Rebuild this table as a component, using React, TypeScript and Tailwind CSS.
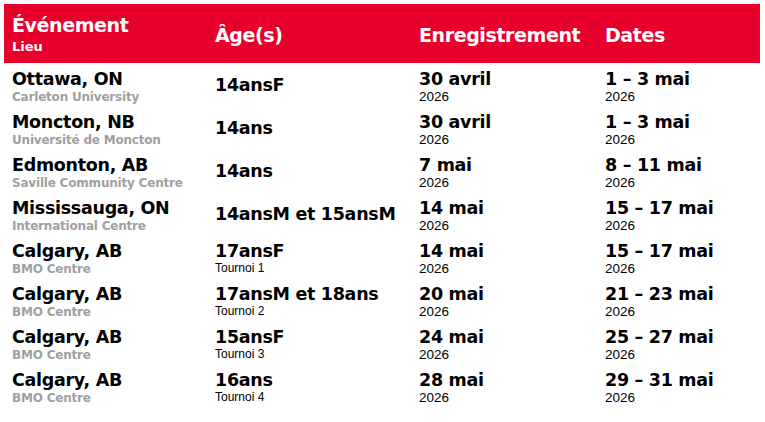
import React from 'react';

interface Row {
  city: string;
  venue: string;
  age: string;
  tournoi?: string;
  reg: string;
  dates: string;
}

const rows: Row[] = [
  { city: 'Ottawa, ON', venue: 'Carleton University', age: '14ansF', reg: '30 avril', dates: '1 – 3 mai' },
  { city: 'Moncton, NB', venue: 'Université de Moncton', age: '14ans', reg: '30 avril', dates: '1 – 3 mai' },
  { city: 'Edmonton, AB', venue: 'Saville Community Centre', age: '14ans', reg: '7 mai', dates: '8 – 11 mai' },
  { city: 'Mississauga, ON', venue: 'International Centre', age: '14ansM et 15ansM', reg: '14 mai', dates: '15 – 17 mai' },
  { city: 'Calgary, AB', venue: 'BMO Centre', age: '17ansF', tournoi: 'Tournoi 1', reg: '14 mai', dates: '15 – 17 mai' },
  { city: 'Calgary, AB', venue: 'BMO Centre', age: '17ansM et 18ans', tournoi: 'Tournoi 2', reg: '20 mai', dates: '21 – 23 mai' },
  { city: 'Calgary, AB', venue: 'BMO Centre', age: '15ansF', tournoi: 'Tournoi 3', reg: '24 mai', dates: '25 – 27 mai' },
  { city: 'Calgary, AB', venue: 'BMO Centre', age: '16ans', tournoi: 'Tournoi 4', reg: '28 mai', dates: '29 – 31 mai' },
];

const bold = "font-['DejaVu_Sans',sans-serif] font-bold";
const main = `${bold} text-[17.5px] leading-[22px] tracking-[-0.3px] text-black whitespace-nowrap`;
const small = "font-['Liberation_Sans',Arial,sans-serif] text-black whitespace-nowrap";

const App = () => {
  return (
    <div className="w-[765px] h-[422px] bg-white pt-[4px] pl-[4px]">
      <div className="w-[756px]">

        {/* header */}
        <div className="flex h-[59px] bg-[#e8002c] text-white">
          <div className="w-[211px] pl-[8px] pt-[10px]">
            <div className={`${bold} text-[19px] leading-[22px] tracking-[-0.4px]`}>Événement</div>
            <div className={`${bold} text-[13px] leading-[16px] mt-[3px]`}>Lieu</div>
          </div>
          <div className={`w-[204px] pt-[20px] ${bold} text-[19px] leading-[22px] tracking-[-0.4px]`}>Âge(s)</div>
          <div className={`w-[186px] pt-[20px] ${bold} text-[19px] leading-[22px] tracking-[-0.4px]`}>Enregistrement</div>
          <div className={`flex-1 pt-[20px] ${bold} text-[19px] leading-[22px] tracking-[-0.4px]`}>Dates</div>
        </div>

        {/* rows */}
        {rows.map((r, i) => (
          <div key={i} className="flex h-[43px]">
            <div className="w-[211px] pl-[8px] pt-[5px]">
              <div className={main}>{r.city}</div>
              <div className={`${bold} text-[12px] leading-[14px] tracking-[-0.2px] text-[#a0a0a0] whitespace-nowrap`}>{r.venue}</div>
            </div>
            {r.tournoi ? (
              <div className="w-[204px] pt-[5px]">
                <div className={main}>{r.age}</div>
                <div className={`${small} text-[12px] leading-[10px] pt-[1px]`}>{r.tournoi}</div>
              </div>
            ) : (
              <div className="w-[204px] flex items-center">
                <div className={main}>{r.age}</div>
              </div>
            )}
            <div className="w-[186px] pt-[5px]">
              <div className={main}>{r.reg}</div>
              <div className={`${small} text-[13.5px] leading-[13px]`}>2026</div>
            </div>
            <div className="flex-1 pt-[5px]">
              <div className={main}>{r.dates}</div>
              <div className={`${small} text-[13.5px] leading-[13px]`}>2026</div>
            </div>
          </div>
        ))}
      </div>
    </div>
  );
};

export default App;
